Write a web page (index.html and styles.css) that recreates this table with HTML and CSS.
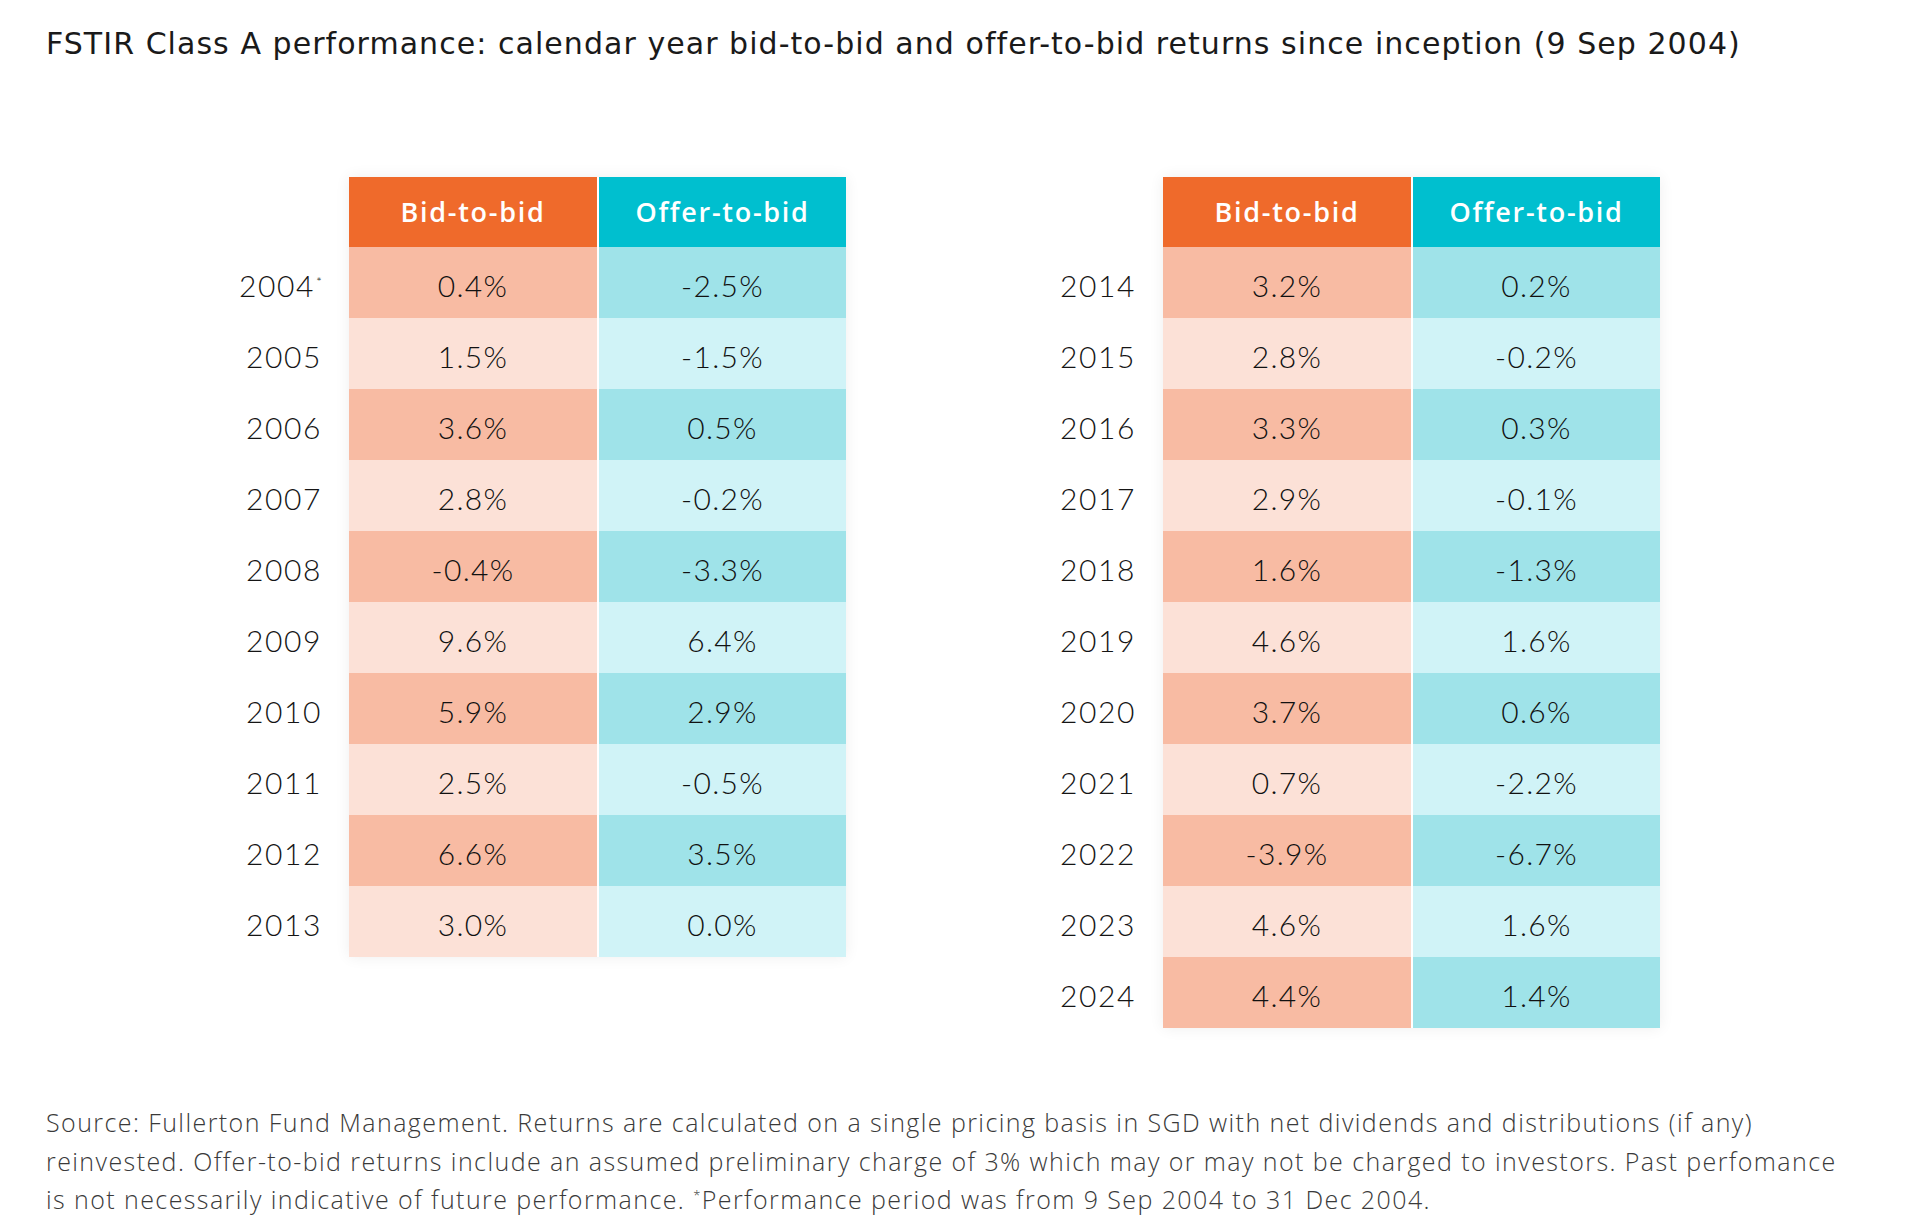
FILE: index.html
```html
<!DOCTYPE html>
<html lang="en">
<head>
<meta charset="utf-8">
<title>FSTIR Class A performance</title>
<link rel="stylesheet" href="styles.css">
</head>
<body>
<div class="page">
  <h1 class="title">FSTIR Class A performance: calendar year bid-to-bid and offer-to-bid returns since inception (9 Sep 2004)</h1>

  <div class="tables">
    <div class="tbl">
      <div class="years">
        <div class="year">2004<sup class="star">*</sup></div>
        <div class="year">2005</div>
        <div class="year">2006</div>
        <div class="year">2007</div>
        <div class="year">2008</div>
        <div class="year">2009</div>
        <div class="year">2010</div>
        <div class="year">2011</div>
        <div class="year">2012</div>
        <div class="year">2013</div>
      </div>
      <div class="grid">
        <div class="hd hd-bid">Bid-to-bid</div><div class="hd hd-off">Offer-to-bid</div>
        <div class="c bid dk">0.4%</div><div class="c off dk">-2.5%</div>
        <div class="c bid lt">1.5%</div><div class="c off lt">-1.5%</div>
        <div class="c bid dk">3.6%</div><div class="c off dk">0.5%</div>
        <div class="c bid lt">2.8%</div><div class="c off lt">-0.2%</div>
        <div class="c bid dk">-0.4%</div><div class="c off dk">-3.3%</div>
        <div class="c bid lt">9.6%</div><div class="c off lt">6.4%</div>
        <div class="c bid dk">5.9%</div><div class="c off dk">2.9%</div>
        <div class="c bid lt">2.5%</div><div class="c off lt">-0.5%</div>
        <div class="c bid dk">6.6%</div><div class="c off dk">3.5%</div>
        <div class="c bid lt">3.0%</div><div class="c off lt">0.0%</div>
      </div>
    </div>

    <div class="tbl">
      <div class="years">
        <div class="year">2014</div>
        <div class="year">2015</div>
        <div class="year">2016</div>
        <div class="year">2017</div>
        <div class="year">2018</div>
        <div class="year">2019</div>
        <div class="year">2020</div>
        <div class="year">2021</div>
        <div class="year">2022</div>
        <div class="year">2023</div>
        <div class="year">2024</div>
      </div>
      <div class="grid">
        <div class="hd hd-bid">Bid-to-bid</div><div class="hd hd-off">Offer-to-bid</div>
        <div class="c bid dk">3.2%</div><div class="c off dk">0.2%</div>
        <div class="c bid lt">2.8%</div><div class="c off lt">-0.2%</div>
        <div class="c bid dk">3.3%</div><div class="c off dk">0.3%</div>
        <div class="c bid lt">2.9%</div><div class="c off lt">-0.1%</div>
        <div class="c bid dk">1.6%</div><div class="c off dk">-1.3%</div>
        <div class="c bid lt">4.6%</div><div class="c off lt">1.6%</div>
        <div class="c bid dk">3.7%</div><div class="c off dk">0.6%</div>
        <div class="c bid lt">0.7%</div><div class="c off lt">-2.2%</div>
        <div class="c bid dk">-3.9%</div><div class="c off dk">-6.7%</div>
        <div class="c bid lt">4.6%</div><div class="c off lt">1.6%</div>
        <div class="c bid dk">4.4%</div><div class="c off dk">1.4%</div>
      </div>
    </div>
  </div>

  <p class="note">Source: Fullerton Fund Management. Returns are calculated on a single pricing basis in SGD with net dividends and distributions (if any)<br>reinvested. Offer-to-bid returns include an assumed preliminary charge of 3% which may or may not be charged to investors. Past perfomance<br>is not necessarily indicative of future performance. <sup class="fstar">*</sup>Performance period was from 9 Sep 2004 to 31 Dec 2004.</p>
</div>
</body>
</html>
```

FILE: styles.css
```css
* { box-sizing: border-box; }

html, body {
  margin: 0;
  padding: 0;
  background: #ffffff;
}

.page {
  width: 1920px;
  height: 1229px;
  padding: 24px 0 0 46px;
  overflow: hidden;
}

.title {
  margin: 0;
  font-family: "DejaVu Sans", "Open Sans", sans-serif;
  font-weight: 400;
  font-size: 30px;
  letter-spacing: 1.05px;
  line-height: 40px;
  color: #1a1a1a;
  white-space: nowrap;
}

.tables {
  display: flex;
  align-items: flex-start;
  gap: 169px;
  margin-top: 113px;
  padding-left: 155px;
}

.tbl {
  display: flex;
  align-items: flex-start;
}

.years {
  width: 148px;
  padding-top: 70px;
}

.year {
  height: 71px;
  display: flex;
  align-items: center;
  justify-content: flex-end;
  padding: 4px 27px 0 0;
  font-family: "Lato", "Liberation Sans", sans-serif;
  font-weight: 300;
  font-size: 30px;
  letter-spacing: 1.6px;
  color: #151515;
}

.star {
  font-size: 14px;
  line-height: 1;
  letter-spacing: 0;
  align-self: flex-start;
  margin-top: 24px;
  margin-left: 1px;
}

.grid {
  display: grid;
  grid-template-columns: 248px 249px;
  grid-template-rows: 70px;
  grid-auto-rows: 71px;
  box-shadow: 0 0 14px rgba(0, 0, 0, 0.07);
}

.hd {
  display: flex;
  align-items: center;
  justify-content: center;
  padding-bottom: 2px;
  font-family: "Open Sans", "Liberation Sans", sans-serif;
  font-weight: 600;
  font-size: 27px;
  letter-spacing: 1.7px;
  color: #ffffff;
}

.hd-bid { background: #ef6a2b; }
.hd-off { background: #00bfcf; border-left: 2px solid #ffffff; }

.c {
  display: flex;
  align-items: center;
  justify-content: center;
  padding-top: 4px;
  font-family: "Lato", "Liberation Sans", sans-serif;
  font-weight: 300;
  font-size: 30px;
  letter-spacing: 1.3px;
  color: #111111;
}

.off { border-left: 2px solid #ffffff; }

.bid.dk { background: #f8bba3; }
.bid.lt { background: #fce1d7; }
.off.dk { background: #9fe3e9; }
.off.lt { background: #d0f3f7; }

.note {
  margin: 75px 0 0 0;
  font-family: "Open Sans", "Liberation Sans", sans-serif;
  font-weight: 300;
  font-size: 25px;
  letter-spacing: 1.42px;
  line-height: 38.5px;
  color: #3a3a3a;
  white-space: nowrap;
}

.fstar {
  font-size: 13px;
  vertical-align: 9px;
  line-height: 0;
}
```
